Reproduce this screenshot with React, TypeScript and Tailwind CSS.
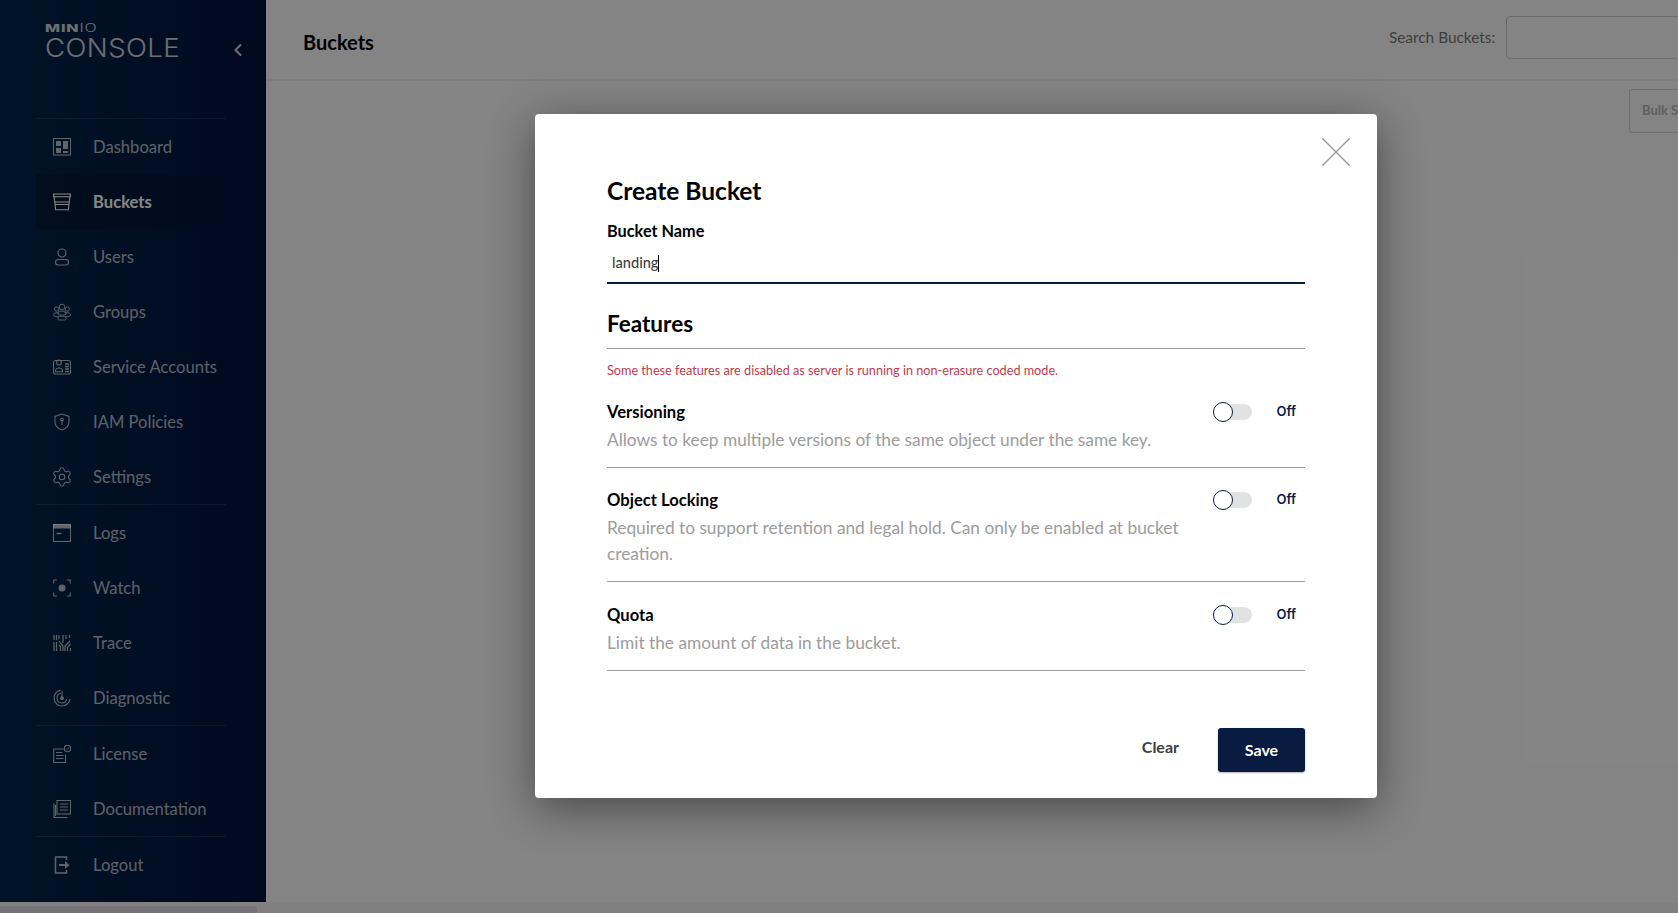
import { ChevronLeft, Settings, X } from "lucide-react";
import type { ReactNode } from "react";

const Icon = ({ children }: { children: ReactNode }) => (
  <svg width="18" height="18" viewBox="0 0 18 18" fill="none" stroke="currentColor" strokeWidth="1.1" className="shrink-0">
    {children}
  </svg>
);

const icons: Record<string, ReactNode> = {
  dashboard: (
    <Icon>
      <rect x="0.5" y="0.5" width="17" height="16.5" />
      <path d="M3 3h5v5H3zM10 3h5v8h-5zM3 10h5v5H3zM10 13h5v2h-5z" fill="currentColor" stroke="none" />
    </Icon>
  ),
  buckets: (
    <Icon>
      <path d="M0.6 1h16.8v2.8H0.6zM1.2 3.8l1.4 13h12.8l1.4-13M2 9h14M2.6 11.5h12.8" />
    </Icon>
  ),
  users: (
    <Icon>
      <circle cx="9" cy="5" r="4" />
      <rect x="2.5" y="11.5" width="13" height="5.5" rx="2.7" />
    </Icon>
  ),
  groups: (
    <Icon>
      <circle cx="9" cy="4" r="2.8" strokeWidth="0.9" />
      <circle cx="3.7" cy="6" r="2.2" strokeWidth="0.9" />
      <circle cx="14.3" cy="6" r="2.2" strokeWidth="0.9" />
      <path d="M6.500 9.800H3.200C1.600 9.800.6 10.600.6 11.800s1 1.800 2.600 1.800h2.300M11.500 9.800h3.300c1.600 0 2.600.8 2.600 2s-1 1.800-2.600 1.800h-2.300" strokeWidth="0.9" />
      <rect x="4.800" y="8.200" width="8.400" height="3.800" rx="1.900" strokeWidth="0.9" />
      <rect x="4.800" y="13.400" width="8.400" height="3.600" rx="1.800" strokeWidth="0.9" />
    </Icon>
  ),
  service: (
    <Icon>
      <rect x="0.5" y="2.500" width="17" height="13.500" rx="2" />
      <circle cx="6" cy="4.500" r="2.400" fill="#021a35" />
      <path d="M2.500 13c0-4 7-4 7 0v.8h-7z" />
      <path d="M12 6h4M12 8.500h4M12 11h4M12 13.500h4" strokeWidth="1.600" />
    </Icon>
  ),
  iam: (
    <Icon>
      <path d="M9 1l7 2.500V9c0 4-3 6.600-7 8-4-1.400-7-4-7-8V3.500z" />
      <circle cx="9" cy="6.500" r="1.300" />
      <path d="M9 7.500v4.500" />
    </Icon>
  ),
  settings: <Settings size={22} strokeWidth={1.100} className="mx-[-2px] shrink-0" />,
  logs: (
    <Icon>
      <rect x="0.5" y="0.5" width="17" height="17" />
      <path d="M0 0h18v4.500H0z" fill="currentColor" stroke="none" />
      <path d="M3.500 9.500h5" strokeWidth="1.500" />
    </Icon>
  ),
  watch: (
    <Icon>
      <path d="M4 1H.7v3.500M14 1h3.300v3.500M4 17H.7v-3.500M14 17h3.300v-3.500" />
      <circle cx="9" cy="9" r="3.500" fill="currentColor" stroke="none" />
    </Icon>
  ),
  trace: (
    <Icon>
      <path d="M1 1v5M3.500 1v5M6 1v4M1 8v9M3.500 8v9M6 7l4 5v5M6 11l1.500 2v4M10 1v8M13 1v4M16.500 1v3M17 7l-5 5v5M17.500 10l-3 3.500V17M17.500 14v3" strokeWidth="1.200" />
    </Icon>
  ),
  diagnostic: (
    <Icon>
      <path d="M7.500 1.100A8 8 0 1 0 17 10" />
      <path d="M7.800 4.300a4.900 4.900 0 1 0 5.900 5.900" />
      <circle cx="9" cy="9.200" r="1.900" fill="currentColor" stroke="none" />
      <path d="M9 1.500v7" />
    </Icon>
  ),
  license: (
    <Icon>
      <path d="M10.500 4H.7v13.500h11.800V9.500" />
      <path d="M3 7.500h6M3 10.500h7.500M3 13.500h7.500" />
      <circle cx="14.500" cy="3.500" r="3.200" />
      <path d="M13 3.500l1.100 1.100 2-2" strokeWidth="0.800" />
    </Icon>
  ),
  documentation: (
    <Icon>
      <rect x="4" y="0.500" width="13.500" height="13.500" />
      <path d="M7 4h8M7 7h8M7 10h8" />
      <path d="M1 3.500v14h13.500M2.500 5v11" />
    </Icon>
  ),
  logout: (
    <Icon>
      <path d="M13.500 4V1H2.500v16h11v-3" strokeWidth="1.500" />
      <path d="M6 8h6V5l4.500 4-4.500 4v-3H6z" fill="currentColor" stroke="none" />
    </Icon>
  ),
};

const navGroups = [
  [
    { key: "dashboard", label: "Dashboard" },
    { key: "buckets", label: "Buckets", active: true },
    { key: "users", label: "Users" },
    { key: "groups", label: "Groups" },
    { key: "service", label: "Service Accounts" },
    { key: "iam", label: "IAM Policies" },
    { key: "settings", label: "Settings" },
  ],
  [
    { key: "logs", label: "Logs" },
    { key: "watch", label: "Watch" },
    { key: "trace", label: "Trace" },
    { key: "diagnostic", label: "Diagnostic" },
  ],
  [
    { key: "license", label: "License" },
    { key: "documentation", label: "Documentation" },
  ],
  [{ key: "logout", label: "Logout" }],
];

function Sidebar() {
  return (
    <aside className="flex h-full w-[266px] shrink-0 flex-col bg-gradient-to-r from-[#03264a] via-[#021c42] to-[#00103e]">
      <div className="flex h-[118px] shrink-0 items-start justify-between pl-[45px] pr-[18px] pt-[21px]">
        <div className="flex flex-col text-white/80">
          <div className="origin-left scale-x-[1.45] font-['Inter',sans-serif] text-[11px] leading-[15px] tracking-[0.6px]">
            <span className="font-extrabold">MIN</span>
            <span className="font-light">IO</span>
          </div>
          <div className="origin-left scale-x-[1.06] font-['Inter',sans-serif] text-[26px] font-light leading-[24px] tracking-[0.4px]">
            CONSOLE
          </div>
        </div>
        <ChevronLeft size={20} strokeWidth={2.500} className="mt-[19px] text-white/80" />
      </div>
      {navGroups.map((group, i) => (
        <div key={i} className="ml-[36px] w-[190px] border-t border-white/10">
          {group.map((item) => (
            <div
              key={item.key}
              className={
                item.active
                  ? "flex h-[55px] w-[219px] items-center gap-[22px] bg-gradient-to-r from-black/25 to-transparent pl-[17px] text-[16.6px] font-bold text-white"
                  : "flex h-[55px] items-center gap-[22px] pl-[17px] text-[16.6px] text-white/70"
              }
            >
              {icons[item.key]}
              <span className="pt-[1px]">{item.label}</span>
            </div>
          ))}
        </div>
      ))}
    </aside>
  );
}

function FeatureRow({ title, children }: { title: string; children: ReactNode }) {
  return (
    <div className="flex items-start justify-between border-b border-[#9c9c9c]">
      <div className="w-[590px]">
        <div className="pt-[4px] text-[16.6px] font-bold leading-[26px] text-black">{title}</div>
        <div className="pb-[14px] pt-[2px] text-[17.3px] leading-[26px] text-[#9c9c9c]">{children}</div>
      </div>
      <div className="mr-[9px] flex items-center pt-[7px]">
        <div className="relative h-[16px] w-[39px]">
          <div className="absolute right-0 top-0 h-[16px] w-[32px] rounded-full bg-[#e2e2e2]" />
          <div className="absolute left-0 top-[-2px] h-[20px] w-[20px] rounded-full border border-[#081c42] bg-white" />
        </div>
        <span className="ml-[24px] font-['Inter',sans-serif] text-[13px] font-semibold text-[#081c42]">Off</span>
      </div>
    </div>
  );
}

function CreateBucketModal() {
  return (
    <div className="absolute inset-0 bg-black/[.47]">
      <div className="relative ml-[535px] mt-[114px] h-[684px] w-[842px] rounded-[4px] bg-white px-[72px] pt-[61px] shadow-[0_10px_45px_rgba(0,0,0,0.45)]">
        <X size={54} strokeWidth={0.6} className="absolute right-[14px] top-[11px] text-[#9a9a9a]" />
        <h1 className="text-[24.5px] font-bold leading-[32px] text-black">Create Bucket</h1>
        <div className="mt-[12px] text-[16.3px] font-bold leading-[24px] text-black">Bucket Name</div>
        <div className="mt-[2px] flex h-[39px] items-center border-b-2 border-[#081c42] pb-[1px] pl-[5px] text-[14.6px] font-medium text-[#3f3f3f]">
          landing
          <span className="h-[17px] w-px bg-black" />
        </div>
        <h2 className="mt-[24px] text-[22.5px] font-bold leading-[32px] text-black">Features</h2>
        <div className="mt-[8px] border-t border-[#9c9c9c]" />
        <p className="mt-[13px] text-[12.67px] leading-[16px] text-[#bf3a50]">
          Some these features are disabled as server is running in non-erasure coded mode.
        </p>
        <div className="mt-[17px]">
          <FeatureRow title="Versioning">Allows to keep multiple versions of the same object under the same key.</FeatureRow>
          <div className="mt-[15px]">
            <FeatureRow title="Object Locking">
              Required to support retention and legal hold. Can only be enabled at bucket creation.
            </FeatureRow>
          </div>
          <div className="mt-[16px]">
            <FeatureRow title="Quota">Limit the amount of data in the bucket.</FeatureRow>
          </div>
        </div>
        <div className="mt-[57px] flex items-center justify-end">
          <button className="mb-[6px] text-[16px] font-bold text-[#3f3f3f]">Clear</button>
          <button className="ml-[39px] h-[44px] w-[87px] rounded-[3px] bg-[#081c42] text-[16px] font-bold text-white shadow-[0_1px_2px_rgba(0,0,0,0.3)]">
            Save
          </button>
        </div>
      </div>
    </div>
  );
}

export default function App() {
  return (
    <div className="relative h-[913px] w-[1678px] overflow-hidden bg-white font-['Lato',sans-serif]">
      <div className="flex h-[902px]">
        <Sidebar />
        <main className="w-[1600px] shrink-0 bg-[#fbfafa]">
          <header className="flex h-[81px] items-center border-b-2 border-[#ececec] pl-[37px] pt-[5px]">
            <span className="text-[20px] font-bold text-black">Buckets</span>
            <div className="ml-[1015px] flex items-center pb-[9px]">
              <span className="text-[15.4px] text-[#777]">Search Buckets:</span>
              <div className="ml-[11px] h-[43px] w-[300px] rounded-[4px] border border-[#c8c8c8] bg-[#fbfafa]" />
            </div>
          </header>
          <div className="pl-[1363px] pt-[8px]">
            <div className="flex h-[44px] w-[150px] items-center rounded-[3px] border border-[#d0d0d0] pl-[12px] text-[13px] font-bold text-[#b5b5b5]">
              Bulk Select
            </div>
          </div>
        </main>
      </div>
      <div className="h-[11px] bg-[#f1f1f1] pt-[4px]">
        <div className="h-full w-[257px] rounded-r-[4px] bg-[#dcdcdc]" />
      </div>
      <CreateBucketModal />
    </div>
  );
}
